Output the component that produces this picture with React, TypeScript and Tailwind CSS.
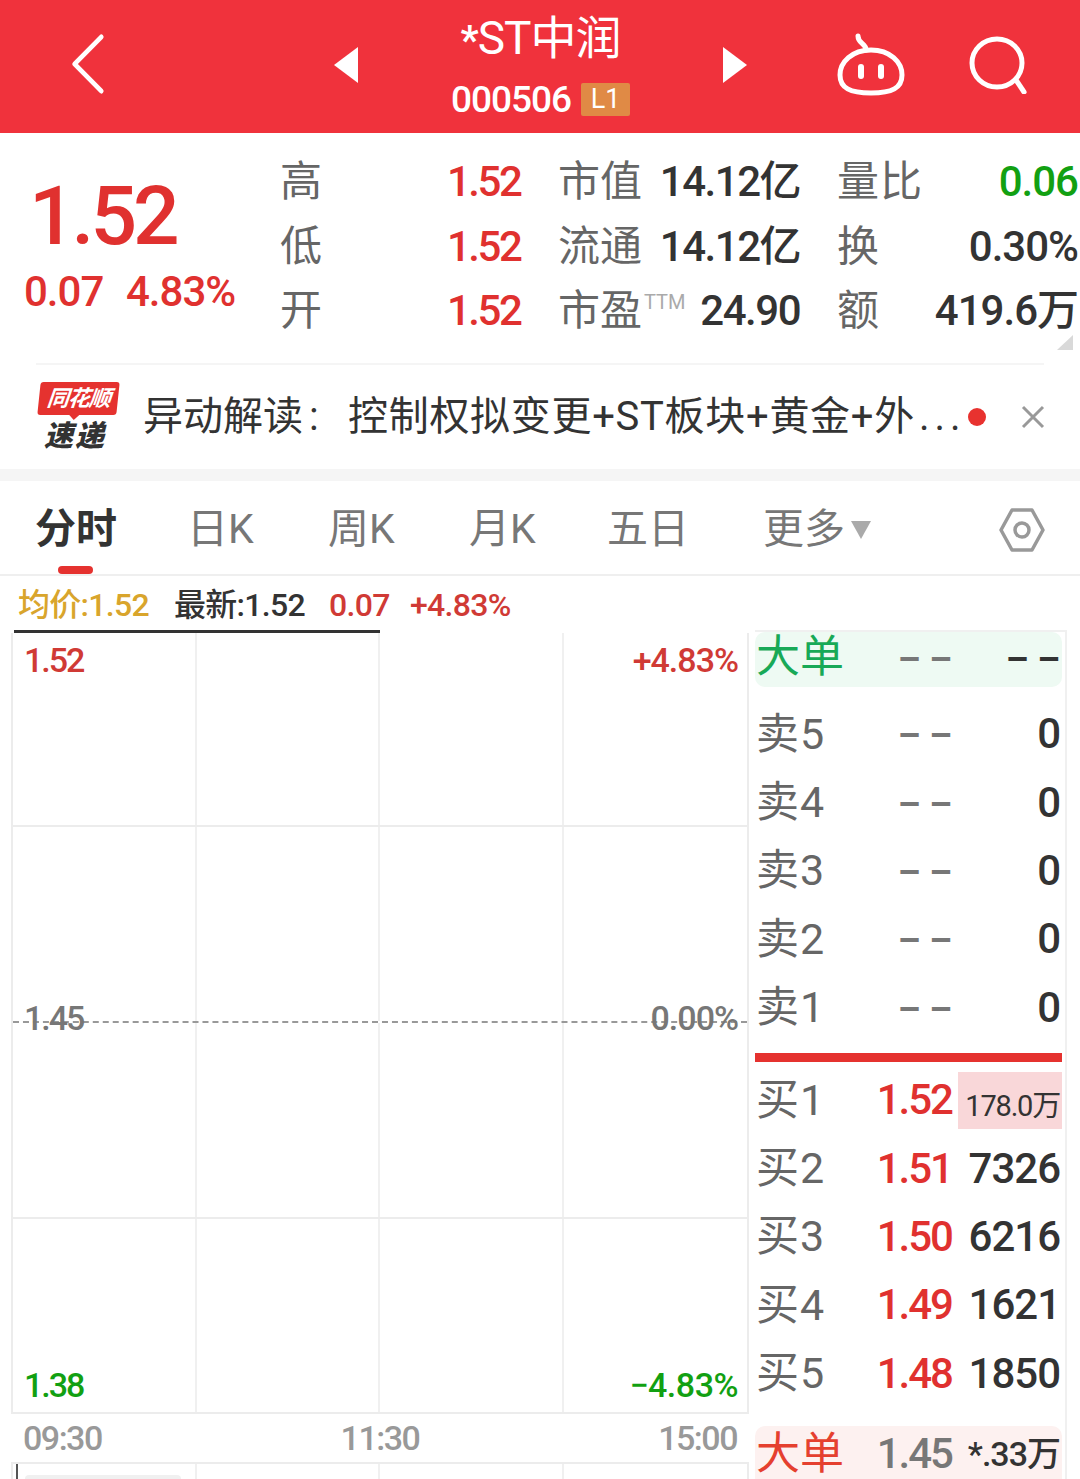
import React from 'react';

const FONT = "font-['Roboto','Noto_Sans_CJK_SC',sans-serif]";

// Stats table row in the quote header
const StatRow = ({ label, price, name, nameExtra, value, name2, value2, value2Class }: {
  label: string;
  price: string;
  name: string;
  nameExtra?: boolean;
  value: string;
  name2: string;
  value2: string;
  value2Class: string;
}) => (
  <div className="flex items-center h-[64.5px] text-[42px] leading-none">
    <span className="w-[167px] text-[#666666]">{label}</span>
    <span className="w-[111px] text-[#e0312f] font-medium tracking-[-2.5px]">{price}</span>
    <div className="w-[242px] flex items-center justify-between">
      <span className="text-[#666666] flex items-start">
        {name}
        {nameExtra && <span className="text-[20px] text-[#aaaaaa] mt-[2px] ml-[2px]">TTM</span>}
      </span>
      <span className="text-[#333333] font-medium tracking-[-1.5px]">{value}</span>
    </div>
    <div className="w-[241px] ml-[37px] flex items-center justify-between">
      <span className="text-[#666666] tracking-[1px]">{name2}</span>
      <span className={`${value2Class} font-medium tracking-[-1px]`}>{value2}</span>
    </div>
  </div>
);

const Dashes = ({ color }: { color: string }) => (
  <span className={`text-[36px] font-bold tracking-[0px] whitespace-nowrap ${color}`}>– –</span>
);

// One line of the order book
const BookRow = ({ label, price, qty, hot }: {
  label: string;
  price?: string;
  qty: string;
  hot?: boolean;
}) => (
  <div className="flex items-center h-[68.4px] pl-[1px] text-[42px] leading-none">
    <span className="w-[104px] text-[43px] text-[#666666] tracking-[1px] whitespace-nowrap">{label}</span>
    <span className="w-[92px] text-right text-[#e0312f] font-medium tracking-[-2px] whitespace-nowrap">
      {price ?? <Dashes color="text-[#777777]" />}
    </span>
    {hot ? (
      <span className="w-[104px] ml-[6px] h-[57px] flex items-end justify-end pr-[2px] pb-[8px] bg-[#f9d7d9] text-[#333333] text-[29px] tracking-[-1.2px] whitespace-nowrap">{qty}</span>
    ) : (
      <span className="w-[108px] text-right text-[#333333] font-medium tracking-[-1px] whitespace-nowrap">{qty}</span>
    )}
  </div>
);

export default function App() {
  const sells = ['卖5', '卖4', '卖3', '卖2', '卖1'];
  const buys = [
    ['买1', '1.52', '178.0万'],
    ['买2', '1.51', '7326'],
    ['买3', '1.50', '6216'],
    ['买4', '1.49', '1621'],
    ['买5', '1.48', '1850'],
  ];
  const tabs = [
    ['日K', 'w-[141px]'],
    ['周K', 'w-[141px]'],
    ['月K', 'w-[138px]'],
    ['五日', 'w-[156px]'],
  ];

  return (
    <div className={`w-[1080px] h-[1479px] overflow-hidden bg-white ${FONT}`}>
      {/* Top bar */}
      <div className="h-[133px] bg-[#f0323c] flex items-center text-white">
        <svg className="ml-[68px] w-[40px] h-[62px] -mt-[5px]" viewBox="0 0 40 62" fill="none" stroke="white" strokeWidth="5" strokeLinecap="round" strokeLinejoin="round">
          <path d="M34 4 L5 31 L34 58" transform="translate(2 0) scale(0.92 1)" />
        </svg>
        <svg className="ml-[226px] w-[24px] h-[36px] -mt-[3px]" viewBox="0 0 24 36" fill="white"><path d="M24 0V36L0 18Z" /></svg>
        <div className="w-[365px] flex flex-col items-center">
          <div className="text-[46px] leading-[52px] h-[52px] tracking-[-1px] whitespace-nowrap -mt-[4px]">
            <span className="text-[40px] font-bold">*</span>ST中润
          </div>
          <div className="flex items-center mt-[17px] h-[36px]">
            <span className="text-[37px] leading-none font-medium tracking-[-1px]">000506</span>
            <span className="ml-[10px] w-[49px] h-[33px] bg-[#e08a45] rounded-[2px] flex items-center justify-center text-[27px] leading-none text-white">L1</span>
          </div>
        </div>
        <svg className="w-[24px] h-[36px] -mt-[3px]" viewBox="0 0 24 36" fill="white"><path d="M0 0V36L24 18Z" /></svg>
        <svg className="ml-[90px] w-[68px] h-[64px] -mt-[4px]" viewBox="0 0 68 64" fill="none" stroke="white" strokeWidth="5">
          <path d="M34 17C53 17 65 29 65 42C65 55 55 60 34 60C13 60 3 55 3 42C3 29 15 17 34 17Z" />
          <path d="M29 17C29 10 21 11 21 3" strokeLinecap="round" />
          <rect x="21" y="31" width="6" height="15" rx="3" fill="white" stroke="none" />
          <rect x="41" y="31" width="6" height="15" rx="3" fill="white" stroke="none" />
        </svg>
        <svg className="ml-[64px] w-[62px] h-[58px] -mt-[4px]" viewBox="0 0 62 58" fill="none" stroke="white" strokeWidth="5" strokeLinecap="round">
          <ellipse cx="28" cy="27" rx="25" ry="24" />
          <path d="M47 44L55 56" />
        </svg>
      </div>

      {/* Quote stats */}
      <div className="h-[230px] relative flex">
        <div className="w-[280px] pl-[24px] pt-[39px]">
          <div className="pl-[5px] text-[82px] leading-[88px] text-[#e0312f] font-medium tracking-[-4px]">1.52</div>
          <div className="flex mt-[8px] text-[42px] leading-[48px] text-[#e0312f] font-medium tracking-[-1px]">
            <span className="w-[102px]">0.07</span>
            <span>4.83%</span>
          </div>
        </div>
        <div className="pt-[17px]">
          <StatRow label="高" price="1.52" name="市值" value="14.12亿" name2="量比" value2="0.06" value2Class="text-[#12a012]" />
          <StatRow label="低" price="1.52" name="流通" value="14.12亿" name2="换" value2="0.30%" value2Class="text-[#333333]" />
          <StatRow label="开" price="1.52" name="市盈" nameExtra value="24.90" name2="额" value2="419.6万" value2Class="text-[#333333]" />
        </div>
        <svg className="absolute left-[1057px] top-[202px] w-[16px] h-[15px]" viewBox="0 0 16 15" fill="#d9d9d9"><path d="M16 0V15H0Z" /></svg>
      </div>

      {/* News ticker */}
      <div className="mx-[36px] border-t-2 border-[#f5f5f5]" />
      <div className="h-[104px] flex items-center pl-[36px]">
        <div className="w-[84px] flex flex-col items-center shrink-0 -mt-[2px]">
          <div className="relative w-[79px] h-[33px] bg-[#e5322f] rounded-[3px] -skew-x-6 flex items-center justify-center">
            <span className="text-[22px] leading-none font-bold italic text-white tracking-[-1px] whitespace-nowrap">同花顺</span>
            <span className="absolute left-[32px] top-[33px] border-x-[5px] border-t-[5px] border-x-transparent border-t-[#e5322f]" />
          </div>
          <span className="mt-[6px] mr-[6px] text-[29px] leading-[30px] font-black italic text-[#333333] tracking-[2px] whitespace-nowrap">速递</span>
        </div>
        <div className="ml-[23px] w-[814px] shrink-0 flex items-center text-[40px] leading-none text-[#333333] whitespace-nowrap">
          <span className="shrink-0">异动解读</span>
          <span className="w-[45px] shrink-0 pl-[6px]">:</span>
          <span className="shrink-0 tracking-[0.7px]">控制权拟变更+ST板块+黄金+外</span>
          <span className="shrink-0 ml-[4px] tracking-[5px]">...</span>
        </div>
        <span className="ml-[11px] w-[18px] h-[18px] rounded-full bg-[#e8322f]" />
        <svg className="ml-[35px] w-[24px] h-[24px]" viewBox="0 0 24 24" stroke="#999999" strokeWidth="3"><path d="M2 2L22 22M22 2L2 22" /></svg>
      </div>
      <div className="h-[12px] bg-[#f5f5f5]" />

      {/* Period tabs */}
      <div className="h-[95px] border-b-2 border-[#efefef] flex items-center pl-[35px] pt-[4px] relative text-[41px] leading-none text-[#777777]">
        <span className="w-[152px] font-bold text-[#333333]">分时</span>
        {tabs.map(([t, w]) => (
          <span key={t} className={w}>{t}</span>
        ))}
        <span className="w-[88px] whitespace-nowrap">更多</span>
        <svg className="w-[20px] h-[18px]" viewBox="0 0 20 18" fill="#aaaaaa"><path d="M0 0H20L10 18Z" /></svg>
        <svg className="ml-[128px] w-[46px] h-[44px]" viewBox="0 0 46 44" fill="none" stroke="#999999" strokeWidth="3.5">
          <path d="M13 2H33L44 22L33 42H13L2 22Z" strokeLinejoin="round" />
          <circle cx="23" cy="22" r="7" />
        </svg>
        <span className="absolute left-[58px] bottom-0 w-[35px] h-[8px] rounded-full bg-[#e5322f]" />
      </div>

      {/* Realtime line */}
      <div className="h-[58px] pl-[18px] flex items-center text-[32px] leading-none font-medium tracking-[-0.7px] whitespace-nowrap">
        <span className="w-[156px] text-[#d9a52c]">均价:1.52</span>
        <span className="w-[155px] text-[#333333]">最新:1.52</span>
        <span className="w-[81px] text-[#d03a35]">0.07</span>
        <span className="text-[#d03a35]">+4.83%</span>
      </div>

      <div className="flex -mt-[1px]">
        {/* Time-share chart */}
        <div className="ml-[11px] w-[738px] shrink-0">
          <div className="relative border-l-2 border-r-2 border-[#ececec]">
            <div className="absolute left-[1px] -top-[3px] w-[366px] h-[3px] bg-[#333333]" />
            {['h-[194px] border-b-2 border-[#ececec]', 'h-[196px] border-b-2 border-dashed border-[#999999]', 'h-[196px] border-b-2 border-[#ececec]', 'h-[195px] border-b-2 border-[#ececec]'].map((cls) => (
              <div key={cls} className={`grid grid-cols-4 ${cls}`}>
                <div className="border-r-2 border-[#f0f0f0]" />
                <div className="border-r-2 border-[#f0f0f0]" />
                <div className="border-r-2 border-[#f0f0f0]" />
                <div />
              </div>
            ))}
            <span className="absolute left-[11px] top-[10px] text-[34px] leading-none font-medium text-[#d03a35] tracking-[-2px]">1.52</span>
            <span className="absolute right-[9px] top-[10px] text-[34px] leading-none font-medium text-[#d03a35] tracking-[-1px]">+4.83%</span>
            <span className="absolute left-[11px] top-[368px] text-[34px] leading-none font-medium text-[#777777] tracking-[-2px]">1.45</span>
            <span className="absolute right-[9px] top-[368px] text-[34px] leading-none font-medium text-[#777777] tracking-[-1px]">0.00%</span>
            <span className="absolute left-[11px] top-[735px] text-[34px] leading-none font-medium text-[#12a012] tracking-[-2px]">1.38</span>
            <span className="absolute right-[9px] top-[735px] text-[34px] leading-none font-medium text-[#12a012] tracking-[-0.5px]">−4.83%</span>
          </div>
          <div className="h-[48px] flex items-center justify-between pl-[12px] pr-[12px] text-[34px] leading-none font-medium text-[#999999] tracking-[-1.5px]">
            <span>09:30</span>
            <span>11:30</span>
            <span>15:00</span>
          </div>
          <div className="relative h-[20px] border-t-2 border-l-2 border-r-2 border-[#ececec] grid grid-cols-4">
            <div className="border-r-2 border-[#f0f0f0]" />
            <div className="border-r-2 border-[#f0f0f0]" />
            <div className="border-r-2 border-[#f0f0f0]" />
            <div />
            <span className="absolute left-[3px] top-0 w-[2px] h-[20px] bg-[#555555]" />
            <span className="absolute left-[12px] top-[11px] w-[156px] h-[8px] rounded-t-[4px] bg-[#f0f0f0]" />
          </div>
        </div>

        {/* Order book */}
        <div className="ml-[6px] w-[312px] h-[860px] -mt-[3px] border-t-2 border-r-2 border-[#f0f0f0] pr-[3px]">
          <div className="h-[55px] rounded-[10px] bg-[#eefaf3] flex items-center pl-[1px] pb-[5px] text-[44px] leading-none">
            <span className="w-[104px] text-[#18a957] whitespace-nowrap">大单</span>
            <span className="w-[92px] text-right"><Dashes color="text-[#777777]" /></span>
            <span className="w-[108px] text-right"><Dashes color="text-[#333333]" /></span>
          </div>
          <div className="mt-[13px]">
            {sells.map((s) => (
              <BookRow key={s} label={s} qty="0" />
            ))}
          </div>
          <div className="mt-[11px] h-[9px] bg-[#e5322f]" />
          <div className="mt-[4px]">
            {buys.map(([l, p, q], i) => (
              <BookRow key={l} label={l} price={p} qty={q} hot={i === 0} />
            ))}
          </div>
          <div className="mt-[18px] h-[56px] rounded-t-[10px] bg-[#fdf1f0] flex items-center pl-[1px] text-[42px] leading-none">
            <span className="w-[104px] text-[44px] text-[#e5402f] whitespace-nowrap">大单</span>
            <span className="w-[92px] text-right text-[#777777] font-medium tracking-[-2px]">1.45</span>
            <span className="w-[108px] text-right text-[#333333] text-[34px] font-medium tracking-[-1px] whitespace-nowrap">*.33万</span>
          </div>
        </div>
      </div>
    </div>
  );
}
